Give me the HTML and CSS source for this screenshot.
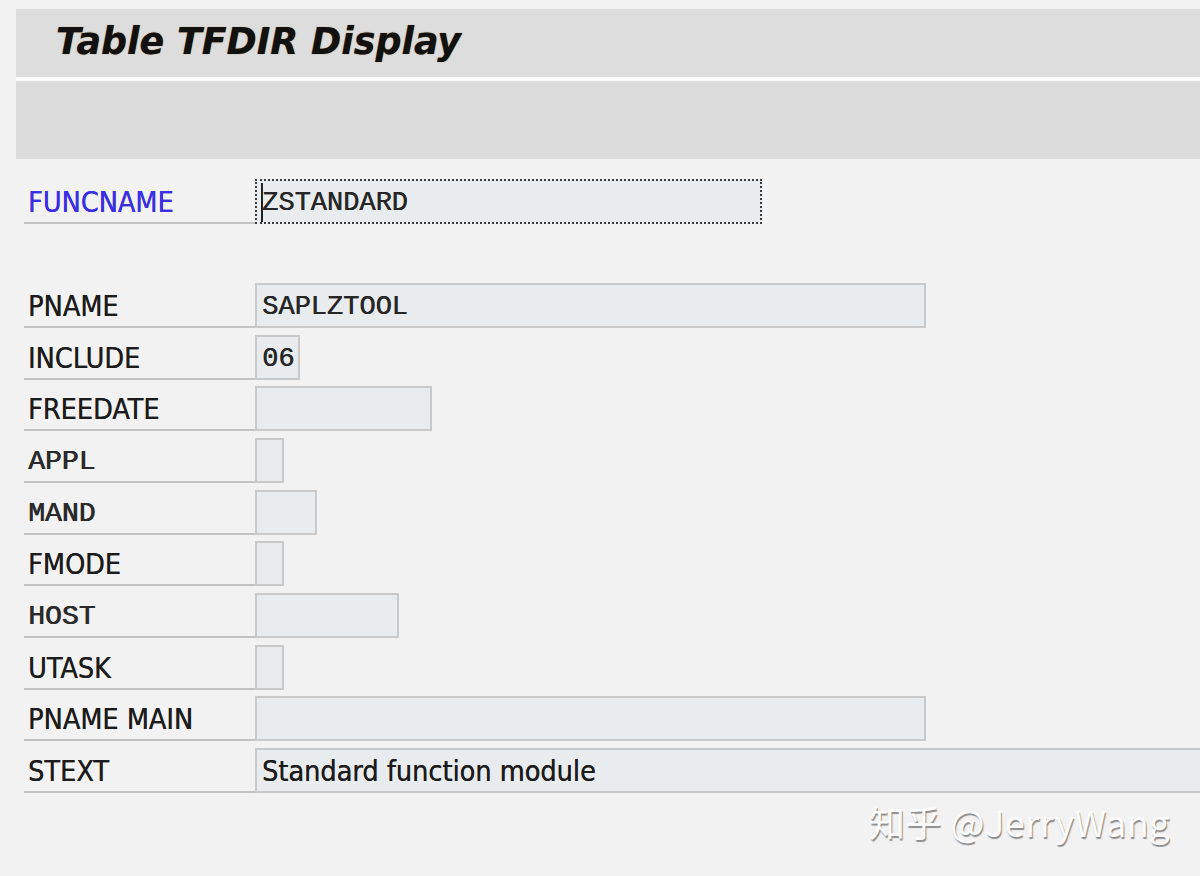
FILE: index.html
```html
<!DOCTYPE html>
<html lang="en">
<head>
    <meta charset="UTF-8">
    <title>Table TFDIR Display</title>
    <link rel="stylesheet" href="styles.css">
</head>
<body>
    <header class="screen-head">
        <div class="title-bar">
            <h1>Table TFDIR Display</h1>
        </div>
        <div class="tool-bar"></div>
    </header>

    <main class="form">
        <div class="row key-row">
            <div class="label key">FUNCNAME</div>
            <div class="field focused" style="width: 507px">ZSTANDARD</div>
        </div>

        <div class="rows">
            <div class="row">
                <div class="label">PNAME</div>
                <div class="field" style="width: 671px">SAPLZTOOL</div>
            </div>
            <div class="row">
                <div class="label">INCLUDE</div>
                <div class="field" style="width: 45px">06</div>
            </div>
            <div class="row">
                <div class="label">FREEDATE</div>
                <div class="field" style="width: 177px"></div>
            </div>
            <div class="row">
                <div class="label mono">APPL</div>
                <div class="field" style="width: 29px"></div>
            </div>
            <div class="row">
                <div class="label mono">MAND</div>
                <div class="field" style="width: 62px"></div>
            </div>
            <div class="row">
                <div class="label">FMODE</div>
                <div class="field" style="width: 29px"></div>
            </div>
            <div class="row">
                <div class="label mono">HOST</div>
                <div class="field" style="width: 144px"></div>
            </div>
            <div class="row">
                <div class="label">UTASK</div>
                <div class="field" style="width: 29px"></div>
            </div>
            <div class="row">
                <div class="label">PNAME MAIN</div>
                <div class="field" style="width: 671px"></div>
            </div>
            <div class="row">
                <div class="label">STEXT</div>
                <div class="field text" style="width: 960px">Standard function module</div>
            </div>
        </div>
    </main>

    <div class="watermark">知乎 @JerryWang</div>
</body>
</html>
```

FILE: styles.css
```css
html {
    overflow: hidden;
}

body {
    margin: 0;
    background-color: #f2f2f2;
    font-family: 'DejaVu Sans Condensed', 'DejaVu Sans', sans-serif;
    color: #1c1c1c;
}

/* Header Styles */
.screen-head {
    margin: 9px 0 0 16px;
}

.title-bar {
    height: 68px;
    background-color: #dddddd;
    border-bottom: 4px solid #fbfbfb;
    display: flex;
    align-items: center;
}

.title-bar h1 {
    margin: 0 0 4px 40px;
    font-family: 'DejaVu Sans', sans-serif;
    font-size: 36.4px;
    font-weight: bold;
    font-style: italic;
    color: #111111;
    text-shadow: 0 0 1px #8a5a20;
}

.tool-bar {
    height: 78px;
    background-color: #dcdcdc;
}

/* Form Styles */
.form {
    padding: 20px 0 0 24px;
}

.row {
    display: flex;
    height: 45px;
}

.key-row {
    margin-bottom: 59px;
}

.rows {
    display: flex;
    flex-direction: column;
    gap: 6.67px;
}

.label {
    width: 231px;
    flex-shrink: 0;
    box-sizing: border-box;
    padding: 4px 0 0 4px;
    border-bottom: 2px solid #c3c3c3;
    display: flex;
    align-items: center;
    font-size: 28.5px;
    white-space: nowrap;
    text-shadow: 0.3px 0 0 currentColor;
}

.label.key {
    color: #3a2fe2;
}

.label.mono {
    font-family: 'Courier New', 'Nimbus Mono PS', 'Liberation Mono', monospace;
    font-size: 28px;
    color: #2a2a2a;
    text-shadow: 0.8px 0 0 currentColor;
}

.field {
    flex-shrink: 0;
    box-sizing: border-box;
    height: 45px;
    padding: 3px 0 0 5px;
    background-color: #e9ecee;
    border: 2px solid #c9c9c9;
    display: flex;
    align-items: center;
    font-family: 'Courier New', 'Nimbus Mono PS', 'Liberation Mono', monospace;
    font-size: 27px;
    color: #262626;
    white-space: nowrap;
    text-shadow: 0.5px 0 0 currentColor;
}

.field.text {
    font-family: 'DejaVu Sans Condensed', 'DejaVu Sans', sans-serif;
    font-size: 28.5px;
    color: #1c1c1c;
    text-shadow: 0.3px 0 0 currentColor;
}

.field.focused {
    position: relative;
    border: 2px dotted #3c3c3c;
}

/* text cursor */
.field.focused::before {
    content: '';
    position: absolute;
    left: 4px;
    top: 2px;
    bottom: 0;
    width: 2px;
    background-color: #222222;
}

/* Watermark */
.watermark {
    margin-top: 2px;
    padding-right: 30px;
    text-align: right;
    font-family: 'Noto Sans CJK SC', 'Noto Sans', sans-serif;
    font-size: 36px;
    letter-spacing: 0.5px;
    color: #fbfbfb;
    text-shadow: 1px 2px 1px #8d8d8d;
}
```
